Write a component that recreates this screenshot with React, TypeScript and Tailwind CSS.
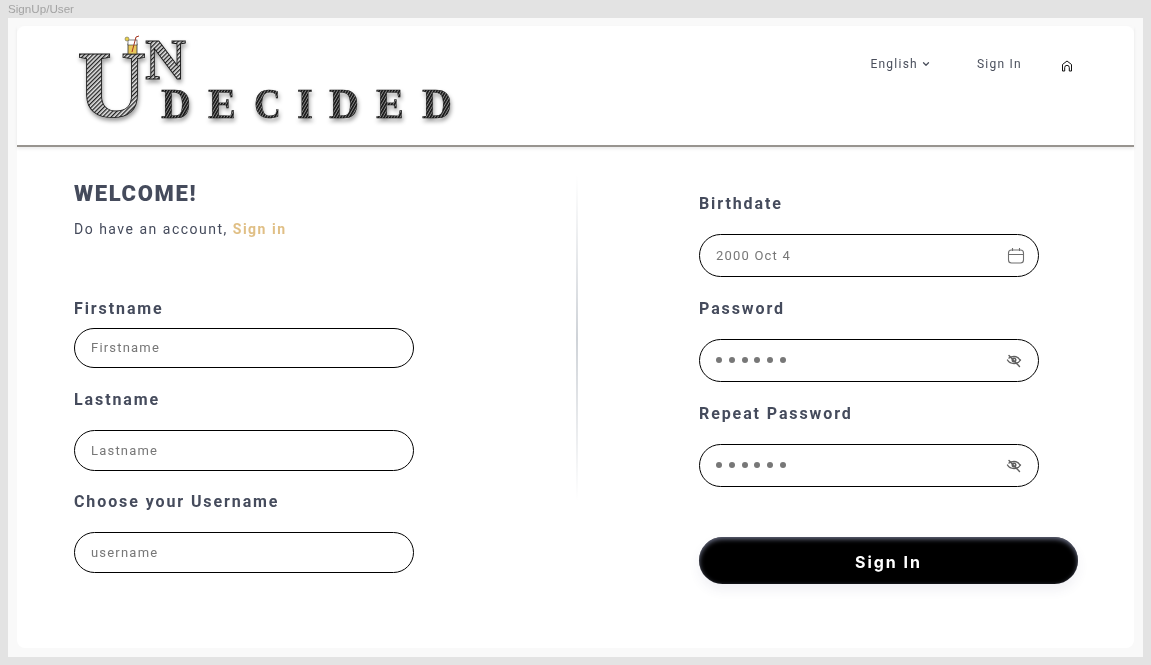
import React from "react";
import {ChevronDown} from "lucide-react";

const font = "font-['Roboto',sans-serif]";

const Logo = () => (
    <svg width="390" height="114" viewBox="0 -4 390 114" className="block">
        <defs>
            <pattern id="hatch" width="3" height="3" patternUnits="userSpaceOnUse" patternTransform="rotate(-45)">
                <rect width="3" height="3" fill="#e4e4e4"/>
                <rect width="3" height="1.300" fill="#222"/>
            </pattern>
            <pattern id="hatchDark" width="2.500" height="2.500" patternUnits="userSpaceOnUse" patternTransform="rotate(-60)">
                <rect width="2.500" height="2.500" fill="#8a8a8a"/>
                <rect width="2.500" height="1.500" fill="#111"/>
            </pattern>
            <filter id="soft" x="-20%" y="-20%" width="140%" height="150%">
                <feDropShadow dx="1" dy="3" stdDeviation="2" floodColor="#000" floodOpacity="0.4"/>
            </filter>
        </defs>
        <g fontFamily="'Liberation Serif', serif" fontWeight="700" filter="url(#soft)">
            <text x="7" y="87" fontSize="96" textLength="70" lengthAdjust="spacingAndGlyphs" fill="url(#hatch)" stroke="#111" strokeWidth="0.8">U</text>
            <text x="75" y="49" fontSize="58" textLength="41" lengthAdjust="spacingAndGlyphs" fill="url(#hatch)" stroke="#111" strokeWidth="0.9">N</text>
            <g fontSize="42" fill="url(#hatchDark)" stroke="#111" strokeWidth="0.4">
                <text x="91" y="88" textLength="30" lengthAdjust="spacingAndGlyphs">D</text>
                <text x="138" y="88" textLength="28" lengthAdjust="spacingAndGlyphs">E</text>
                <text x="184" y="88" textLength="27" lengthAdjust="spacingAndGlyphs">C</text>
                <text x="227" y="88" textLength="16" lengthAdjust="spacingAndGlyphs">I</text>
                <text x="259" y="88" textLength="30" lengthAdjust="spacingAndGlyphs">D</text>
                <text x="306" y="88" textLength="28" lengthAdjust="spacingAndGlyphs">E</text>
                <text x="352" y="88" textLength="30" lengthAdjust="spacingAndGlyphs">D</text>
            </g>
        </g>
        {/* glass on the U */}
        <rect x="58" y="14" width="9" height="10" fill="#e8c75a" stroke="#333" strokeWidth="0.8"/>
        <rect x="58" y="10" width="9" height="5" fill="#fff" stroke="#333" strokeWidth="0.6"/>
        <circle cx="57" cy="9" r="2" fill="#e8d04a" stroke="#555" strokeWidth="0.5"/>
        <path d="M62 22 L66 7 L69 6" fill="none" stroke="#a5341f" strokeWidth="1"/>
    </svg>
);

const Home = () => (
    <svg width="12" height="12" viewBox="0 0 12 12" fill="none" stroke="#111" strokeWidth="1">
        <path d="M1.500 11V4.500L6 1l4.500 3.500V11H8.300V7.600a2.300 2.300 0 0 0-4.600 0V11H1.500Z" strokeLinejoin="round"/>
    </svg>
);

const CalendarIcon = () => (
    <svg width="18" height="18" viewBox="0 0 18 18" fill="none" stroke="#6f6f6f" strokeWidth="1.100">
        <rect x="1.500" y="3" width="15" height="13" rx="3"/>
        <path d="M1.500 7.500h15M5.500 1v3M12.500 1v3"/>
    </svg>
);

const EyeOffIcon = () => (
    <svg width="16" height="16" viewBox="0 0 16 16" fill="none" stroke="#5f5f5f" strokeWidth="1.400" strokeLinecap="round">
        <path d="M1.500 7C3 9.500 5.500 10.500 8 10.500s5-1 6.500-3.500"/>
        <path d="M3 5C4.500 3.800 6 3.500 8 3.500c2.500 0 4.500 1 6 3.500"/>
        <circle cx="8" cy="7" r="1.800"/>
        <path d="M3 2.500l10.500 11"/>
    </svg>
);

const Label = ({children, className = ""}: {children: React.ReactNode; className?: string}) => (
    <div className={`text-[16px] leading-[18px] font-bold tracking-[1.900px] text-[#454b5c] ${className}`}>
        {children}
    </div>
);

const Input = ({text, h = "h-[41px]", children}: {text: string; h?: string; children?: React.ReactNode}) => (
    <div className={`flex items-center justify-between w-[340px] ${h} border border-black rounded-full bg-white pl-4 pr-[13px]`}>
        <span className="text-[13px] tracking-[1.200px] text-[#777]">{text}</span>
        {children}
    </div>
);

const Dots = () => (
    <div className="flex gap-[6.800px] mb-px">
        {[0, 1, 2, 3, 4, 5].map((i) => (
            <span key={i} className="w-[6px] h-[6px] rounded-full bg-[#777]"/>
        ))}
    </div>
);

const PasswordInput = () => (
    <div className="flex items-center justify-between w-[340px] h-[43px] border border-black rounded-full bg-white pl-4 pr-4">
        <Dots/>
        <EyeOffIcon/>
    </div>
);

const App: React.FC = () => {
    return (
        <div className={`${font} will-change-transform w-[1151px] h-[665px] overflow-hidden bg-[#e3e3e3] flex flex-col`}>
            <div className="h-[18px] pl-2 text-[11.650px] leading-[18px] text-[#a3a3a3] font-['Liberation_Sans',sans-serif]">
                SignUp/User
            </div>
            <div className="mx-2 h-[639px] bg-[#f9f9f9] px-[9px] pt-2">
                <div className="h-[622px] rounded-lg bg-white flex flex-col">
                    <header className="h-[121px] shrink-0 border-b-2 border-[#98948f] shadow-[0_2px_3px_rgba(0,0,0,0.08)] flex justify-between pl-[53px]">
                        <div>
                            <Logo/>
                        </div>
                        <nav className="flex items-start pt-[30px] pr-[61px] text-[12px] leading-[16px] tracking-[1.250px] text-[#4a4f5c]">
                            <span className="flex items-center gap-[3px]">
                                English <ChevronDown size={10} strokeWidth={3}/>
                            </span>
                            <span className="ml-[46px]">Sign In</span>
                            <span className="ml-[39px] mt-[4px]"><Home/></span>
                        </nav>
                    </header>
                    <main className="flex flex-1 min-h-0">
                        <section className="w-[559px] shrink-0 pl-[57px] pt-[34px]">
                            <h1 className="text-[22px] leading-[26px] font-black tracking-[1.650px] text-[#454b5c]">WELCOME!</h1>
                            <p className="mt-[13px] text-[14px] leading-[18px] tracking-[1.500px] text-[#454b5c]">
                                Do have an account, <span className="font-bold text-[#e0bf85]">Sign in</span>
                            </p>
                            <Label className="mt-[62px]">Firstname</Label>
                            <div className="mt-[10px]"><Input text="Firstname" h="h-[40px]"/></div>
                            <Label className="mt-[23px]">Lastname</Label>
                            <div className="mt-[21px]"><Input text="Lastname"/></div>
                            <Label className="mt-[22px]">Choose your Username</Label>
                            <div className="mt-[21px]"><Input text="username"/></div>
                        </section>
                        <div className="w-[2px] h-[326px] mt-[28px] bg-gradient-to-b from-transparent via-[#cfd3d8] to-transparent"/>
                        <section className="pl-[121px] pt-[48px]">
                            <Label>Birthdate</Label>
                            <div className="mt-[21px]">
                                <Input text="2000 Oct 4" h="h-[43px]"><CalendarIcon/></Input>
                            </div>
                            <Label className="mt-[23px]">Password</Label>
                            <div className="mt-[21px]"><PasswordInput/></div>
                            <Label className="mt-[23px]">Repeat Password</Label>
                            <div className="mt-[21px]"><PasswordInput/></div>
                            <button className="mt-[50px] w-[379px] h-[47px] pt-[2px] rounded-full bg-black text-white text-[16px] font-bold tracking-[2px] font-['Inter',sans-serif] shadow-[inset_0_2px_5px_rgba(120,125,150,0.9),0_6px_12px_rgba(60,70,120,0.08)]">
                                Sign In
                            </button>
                        </section>
                    </main>
                </div>
            </div>
        </div>
    );
};

export default App;
